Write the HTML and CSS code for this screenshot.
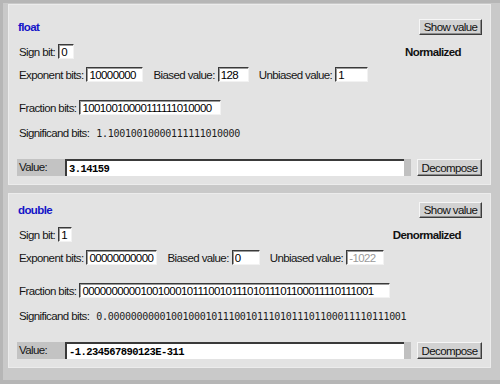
FILE: index.html
```html
<!DOCTYPE html>
<html>
<head>
<meta charset="utf-8">
<link rel="stylesheet" href="styles.css">
</head>
<body>
<div class="frame">

  <div class="panel panel-first">
    <div class="head">
      <span class="type">float</span>
      <button class="btn btn-show">Show value</button>
    </div>
    <div class="row row-sign">
      <span class="lbl">Sign bit:</span>
      <input class="f fs-sign" type="text" value="0">
      <span class="kind">Normalized</span>
    </div>
    <div class="row row-exp">
      <span class="lbl">Exponent bits:</span>
      <input class="f fs-exp" type="text" value="10000000">
      <span class="lbl">Biased value:</span>
      <input class="f fs-bias" type="text" value="128">
      <span class="lbl">Unbiased value:</span>
      <input class="f fs-unb" type="text" value="1">
    </div>
    <div class="row row-frac">
      <span class="lbl">Fraction bits:</span>
      <input class="f fs-frac" type="text" value="10010010000111111010000">
    </div>
    <div class="row row-sig">
      <span class="lbl">Significand bits:</span>
      <span class="bits">1.10010010000111111010000</span>
    </div>
    <div class="row row-val">
      <span class="val-lbl">Value:</span>
      <input class="f val" type="text" value="3.14159">
      <span class="strip"></span>
      <button class="btn btn-dec">Decompose</button>
    </div>
  </div>

  <div class="panel">
    <div class="head">
      <span class="type">double</span>
      <button class="btn btn-show">Show value</button>
    </div>
    <div class="row row-sign">
      <span class="lbl">Sign bit:</span>
      <input class="f fd-sign" type="text" value="1">
      <span class="kind">Denormalized</span>
    </div>
    <div class="row row-exp">
      <span class="lbl">Exponent bits:</span>
      <input class="f fd-exp" type="text" value="00000000000">
      <span class="lbl">Biased value:</span>
      <input class="f fd-bias" type="text" value="0">
      <span class="lbl">Unbiased value:</span>
      <input class="f fd-unb" type="text" value="-1022" disabled>
    </div>
    <div class="row row-frac">
      <span class="lbl">Fraction bits:</span>
      <input class="f fd-frac" type="text" value="0000000000100100010111001011101011101100011110111001">
    </div>
    <div class="row row-sig">
      <span class="lbl">Significand bits:</span>
      <span class="bits">0.0000000000100100010111001011101011101100011110111001</span>
    </div>
    <div class="row row-val">
      <span class="val-lbl">Value:</span>
      <input class="f val" type="text" value="-1.234567890123E-311">
      <span class="strip"></span>
      <button class="btn btn-dec">Decompose</button>
    </div>
  </div>

</div>
</body>
</html>
```

FILE: styles.css
```css
html {
  background-color: #b6b6b6;
}

body {
  margin: 0;
  width: 500px;
  height: 384px;
  overflow: hidden;
  font-family: "Liberation Sans", Arial, sans-serif;
  font-size: 11.5px;
  letter-spacing: -0.6px;
  color: #151515;
}

.frame {
  margin: 3px 0 4px 3px;
  height: 377px;
  background-color: #c9c9c9;
  padding: 1px 0 0 5px;
  box-sizing: border-box;
}

.panel {
  width: 483px;
  box-sizing: border-box;
  background-color: #e3e3e3;
  border: 1px solid #ececec;
  padding: 8px 8px 8px 10px;
  margin-bottom: 8px;
}

.panel-first {
  padding-top: 14px;
}

.head {
  display: flex;
  align-items: center;
  justify-content: space-between;
  height: 15px;
}

.type {
  color: #1414c8;
  font-weight: bold;
  margin-left: -1px;
}

.btn {
  height: 16px;
  padding: 0;
  margin: 0;
  font-family: "Liberation Sans", Arial, sans-serif;
  font-size: 11.5px;
  letter-spacing: -0.6px;
  color: #111;
  background-color: #d2d2d2;
  border: 1px solid;
  border-color: #f6f6f6 #3c3c3c #3c3c3c #f6f6f6;
  box-shadow: inset -1px -1px 0 #8c8c8c;
}

.btn-show {
  width: 63px;
}

.btn-dec {
  width: 65px;
  height: 17px;
}

.row {
  display: flex;
  align-items: center;
  height: 15px;
}

.row-sign {
  margin-top: 10px;
}

.row-exp {
  margin-top: 8px;
}

.row-frac {
  margin-top: 18px;
}

.row-sig {
  margin-top: 11px;
  height: 14px;
}

.row-val {
  margin-top: 19px;
  height: 17px;
  margin-left: -2px;
}

.lbl {
  margin-right: 3px;
  white-space: nowrap;
}

.kind {
  margin-left: auto;
  margin-right: 21px;
  font-weight: bold;
  color: #111;
}

.f {
  height: 15px;
  box-sizing: border-box;
  margin: 0 10px 0 0;
  padding: 0 2px;
  border: 1px solid;
  border-color: #3a3a3a #f2f2f2 #f2f2f2 #3a3a3a;
  box-shadow: inset 1px 1px 0 #9a9a9a;
  background-color: #fff;
  font-family: "Liberation Sans", Arial, sans-serif;
  font-size: 11.5px;
  letter-spacing: -0.6px;
  color: #000;
  outline: none;
}

.f:disabled {
  color: #9a9a9a;
  background-color: #fff;
}

.fs-sign { width: 16px; }
.fs-exp { width: 57px; }
.fs-bias { width: 31px; }
.fs-unb { width: 33px; }
.fs-frac { width: 142px; }

.fd-sign { width: 14px; }
.fd-exp { width: 71px; }
.fd-bias { width: 28px; }
.fd-unb { width: 38px; }
.fd-frac { width: 311px; }

.bits {
  margin-left: 4px;
  font-family: "DejaVu Sans Mono", monospace;
  font-size: 10px;
  letter-spacing: -0.28px;
  color: #1c1c1c;
}

.val-lbl {
  width: 48px;
  height: 17px;
  line-height: 17px;
  padding-left: 2px;
  box-sizing: border-box;
  background-color: #c3c3c3;
}

.val {
  flex: 1;
  height: 17px;
  margin: 0;
  border-width: 2px 0 0 2px;
  border-color: #3a3a3a;
  box-shadow: none;
  font-family: "Liberation Mono", monospace;
  font-weight: bold;
  font-size: 10.5px;
  letter-spacing: -0.55px;
}

.strip {
  width: 7px;
  height: 17px;
  background-color: #c0c0c0;
  margin-right: 6px;
}
```
